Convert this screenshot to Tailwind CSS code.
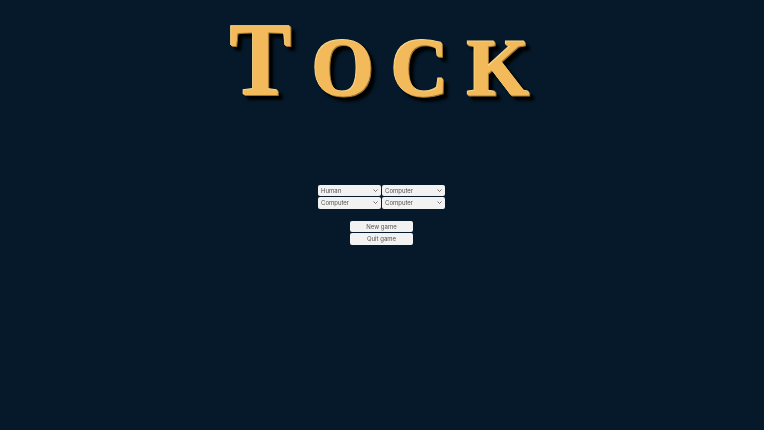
<!DOCTYPE html>
<html lang="en">
<head>
<meta charset="utf-8">
<title>Tock</title>
<script src="https://cdn.jsdelivr.net/npm/@tailwindcss/browser@4"></script>
</head>
<body class="m-0 bg-[#06192a] w-[764px] h-[430px] overflow-hidden font-['Inter',sans-serif]">
<main class="flex flex-col items-center w-full h-full">
  <h1 class="w-[321px] h-[185px] mr-[3px] pt-[8px] font-['Liberation_Serif',serif] font-bold whitespace-nowrap leading-none flex items-baseline [filter:blur(0.4px)_drop-shadow(-0.5px_-0.5px_0.3px_#fbd88a)_drop-shadow(1px_1px_0.4px_#9c7330)_drop-shadow(4px_4px_1.5px_#000)]">
    <span class="w-[82px] flex justify-center"><span class="text-[104px] scale-x-[0.88] text-[#f2ba5b] [-webkit-text-stroke:1px_#f2ba5b]">T</span></span>
    <span class="w-[82px] flex justify-center"><span class="text-[82px] uppercase scale-x-[0.97] text-[#f2ba5b] [-webkit-text-stroke:1px_#f2ba5b]">o</span></span>
    <span class="w-[71px] flex justify-center"><span class="text-[82px] uppercase scale-x-[0.97] text-[#f2ba5b] [-webkit-text-stroke:1px_#f2ba5b]">c</span></span>
    <span class="w-[86px] flex justify-center"><span class="text-[80px] uppercase text-[#f2ba5b] [-webkit-text-stroke:1px_#f2ba5b]">k</span></span>
  </h1>
  <div class="grid grid-cols-[63px_63px] gap-x-[1px] gap-y-[1px] mr-[1px] blur-[0.4px]">
    <div class="relative flex items-center h-[11px] bg-[#f2f2f2] rounded-[2px]"><span class="pl-[3px] text-[6px] leading-none text-[#555]">Human</span><svg class="absolute right-[3px] top-[4px] w-[5px] h-[3px]" viewBox="0 0 5 3" fill="none" stroke="#555" stroke-width="0.8"><path d="M0.5 0.5 2.5 2.5 4.5 0.5"/></svg></div>
    <div class="relative flex items-center h-[11px] bg-[#f2f2f2] rounded-[2px]"><span class="pl-[3px] text-[6px] leading-none text-[#555]">Computer</span><svg class="absolute right-[3px] top-[4px] w-[5px] h-[3px]" viewBox="0 0 5 3" fill="none" stroke="#555" stroke-width="0.8"><path d="M0.5 0.5 2.5 2.5 4.5 0.5"/></svg></div>
    <div class="relative flex items-center h-[12px] bg-[#f2f2f2] rounded-[2px]"><span class="pl-[3px] text-[6px] leading-none text-[#555]">Computer</span><svg class="absolute right-[3px] top-[4px] w-[5px] h-[3px]" viewBox="0 0 5 3" fill="none" stroke="#555" stroke-width="0.8"><path d="M0.5 0.5 2.5 2.5 4.5 0.5"/></svg></div>
    <div class="relative flex items-center h-[12px] bg-[#f2f2f2] rounded-[2px]"><span class="pl-[3px] text-[6px] leading-none text-[#555]">Computer</span><svg class="absolute right-[3px] top-[4px] w-[5px] h-[3px]" viewBox="0 0 5 3" fill="none" stroke="#555" stroke-width="0.8"><path d="M0.5 0.5 2.5 2.5 4.5 0.5"/></svg></div>
  </div>
  <div class="flex flex-col gap-[1px] mt-[12px] mr-[1px] blur-[0.4px]">
    <button class="w-[63px] h-[11px] bg-[#f2f2f2] rounded-[2px] text-[6px] leading-none text-[#555] text-center">New game</button>
    <button class="w-[63px] h-[12px] bg-[#f2f2f2] rounded-[2px] text-[6px] leading-none text-[#555] text-center">Quit game</button>
  </div>
</main>
</body>
</html>
